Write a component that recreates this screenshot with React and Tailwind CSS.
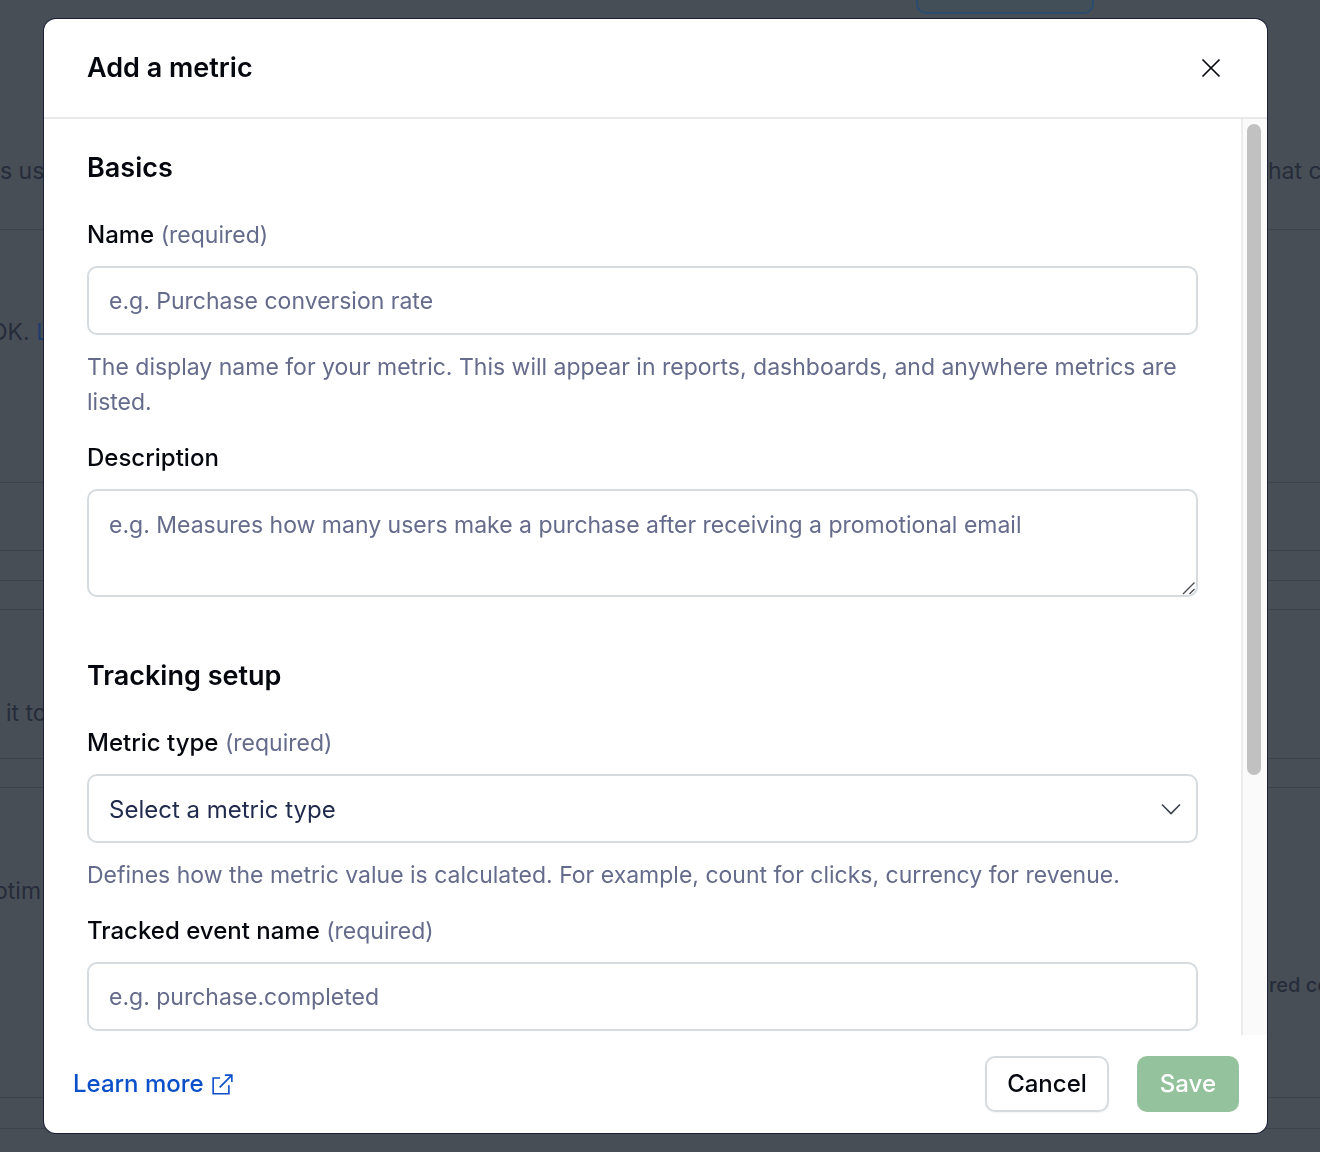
import React from 'react';

const inputClass =
  'block w-full rounded-[10px] border-2 border-[#d5dbde] bg-white px-5 text-[#1f2a4d] placeholder:text-[#656b8b] placeholder:opacity-100 focus:outline-none';

// --- Page behind the dialog ---
const pageRows = [
  { height: 'h-[216px]', left: 's us', right: 'hat c', pos: 'items-end pb-10' },
  { height: 'h-[253px]', left: 'OK.', link: 'L', pos: 'items-start pt-[84px]', pull: '-ml-2.5' },
  { height: 'h-[68px]' },
  { height: 'h-[30px]' },
  { height: 'h-[29px]' },
  { height: 'h-[149px]', left: 'it to', pos: 'items-start pt-[85px]', pull: 'ml-1.5' },
  { height: 'h-[29px]' },
];

const PageRow = ({ row }) => (
  <div className={`flex justify-between border-b border-[#3e434b] overflow-hidden leading-9 whitespace-nowrap ${row.height} ${row.pos || ''}`}>
    {row.left && (
      <p className={row.pull}>
        {row.left} {row.link && <a href="#docs" className="text-[#1d3c6b]">{row.link}</a>}
      </p>
    )}
    {row.right && <p className="w-[52px]">{row.right}</p>}
  </div>
);

const Backdrop = () => (
  <div aria-hidden="true" className="h-screen overflow-hidden bg-[#484e56] text-[23px] text-[#262c3a]">
    <div className="flex h-3.5 items-end justify-end overflow-hidden pr-[226px]">
      <div className="h-12 w-[178px] shrink-0 rounded-[10px] border-2 border-[#2b4c6e] bg-[#434f58]" />
    </div>
    {pageRows.map((row, i) => (
      <PageRow key={i} row={row} />
    ))}
    <div className="h-[310px] border-b border-[#3e434b] overflow-hidden">
      <p className="-ml-1.5 pt-[85px] leading-9">otim</p>
      <p className="ml-auto w-[51px] pt-[58px] text-xl leading-9 font-medium whitespace-nowrap">red co</p>
    </div>
    <div className="h-[31px] border-b border-[#3e434b]" />
  </div>
);

// --- Form pieces ---
const Label = ({ htmlFor, required, children }) => (
  <label htmlFor={htmlFor} className="mb-3.5 block text-2xl leading-[35px] font-medium text-[#05070f]">
    {children}
    {required && <span className="text-[23px] leading-none font-normal text-[#656b8b]"> (required)</span>}
  </label>
);

const Hint = ({ children }) => (
  <p className="mt-[15px] text-[23px] leading-[35px] text-[#656b8b]">{children}</p>
);

const SectionTitle = ({ children }) => (
  <h2 className="mb-8 text-[27px] leading-[35px] font-semibold text-[#05070f]">{children}</h2>
);

const App = () => {
  return (
    <div className="font-['Inter','Liberation_Sans',sans-serif]">
      <Backdrop />

      <div className="fixed inset-0 pt-[19px] pr-[53px] pb-[19px] pl-11">
        <div role="dialog" aria-labelledby="dialog-title" className="flex h-full flex-col overflow-hidden rounded-xl bg-white ring-1 ring-[#1b2136]">
          {/* Header */}
          <header className="flex h-[100px] shrink-0 items-center justify-between border-b-2 border-[#e8e9ea] pr-[46px] pl-[43px]">
            <h1 id="dialog-title" className="text-[27px] font-semibold text-[#05070f]">Add a metric</h1>
            <button type="button" aria-label="Close">
              <svg width="20" height="20" viewBox="0 0 20 20" fill="none" stroke="#05070f" strokeWidth="1.7">
                <path d="M1.5 1.5l17 17M18.5 1.5l-17 17" />
              </svg>
            </button>
          </header>

          {/* Body */}
          <div className="flex min-h-0 flex-1">
            <form className="min-w-0 flex-1 overflow-y-auto pt-[31px] pr-[43px] pb-1 pl-[43px] [scrollbar-width:none]">
              <SectionTitle>Basics</SectionTitle>
              <div className="mb-5">
                <Label htmlFor="name" required>Name</Label>
                <input id="name" type="text" placeholder="e.g. Purchase conversion rate" className={`${inputClass} h-[69px] text-[23px]`} />
                <Hint>
                  The display name for your metric. This will appear in reports, dashboards, and anywhere metrics are listed.
                </Hint>
              </div>
              <div className="mb-[61px]">
                <Label htmlFor="description">Description</Label>
                <div className="relative">
                  <textarea
                    id="description"
                    placeholder="e.g. Measures how many users make a purchase after receiving a promotional email"
                    className={`${inputClass} h-[108px] resize-none py-[17px] text-[23px] leading-[35px]`}
                  />
                  <svg className="pointer-events-none absolute right-0.5 bottom-0.5" width="14" height="14" viewBox="0 0 14 14" fill="none" stroke="#4b4d52" strokeWidth="1.4">
                    <path d="M1 13L12.5 1.5M7.5 13l5-5" />
                  </svg>
                </div>
              </div>

              <SectionTitle>Tracking setup</SectionTitle>
              <div className="mb-5">
                <Label htmlFor="type" required>Metric type</Label>
                <div className="relative">
                  <select id="type" className={`${inputClass} h-[69px] appearance-none pt-0.5 text-2xl`}>
                    <option>Select a metric type</option>
                  </select>
                  <svg className="pointer-events-none absolute top-[29px] right-[17px]" width="20" height="12" viewBox="0 0 20 12" fill="none" stroke="#3a3f4d" strokeWidth="1.6">
                    <path d="M1 1.5l9 9 9-9" />
                  </svg>
                </div>
                <Hint>Defines how the metric value is calculated. For example, count for clicks, currency for revenue.</Hint>
              </div>
              <div>
                <Label htmlFor="event" required>Tracked event name</Label>
                <input id="event" type="text" placeholder="e.g. purchase.completed" className={`${inputClass} h-[69px] text-[23px]`} />
              </div>
            </form>
            {/* Scroll track */}
            <div className="w-[26px] shrink-0 border-l-2 border-[#ececec] bg-[#fafafa] pt-[5px] pl-1">
              <div className="h-5/7 w-3.5 rounded-full bg-[#c1c1c1]" />
            </div>
          </div>

          {/* Footer */}
          <footer className="flex h-[98px] shrink-0 items-center justify-between pr-7 pl-[29px] text-2xl font-medium">
            <a href="#learn-more" className="flex items-center gap-2 text-[#0b4fc9]">
              Learn more
              <svg width="21" height="21" viewBox="0 0 22 22" fill="none" stroke="currentColor" strokeWidth="1.7">
                <path d="M8.5 4.2H1.2v16.5h16.5v-9M8 14L20.8 1.2M13.5 1.2h7.3v7.3" />
              </svg>
            </a>
            <div className="flex gap-7">
              <button type="button" className="h-14 rounded-[10px] border-2 border-[#d5dbde] px-5 text-[#05070f] shadow-xs">Cancel</button>
              <button type="submit" disabled className="h-14 rounded-[10px] bg-[#94c29d] px-[23px] text-white">Save</button>
            </div>
          </footer>
        </div>
      </div>
    </div>
  );
};

export default App;
